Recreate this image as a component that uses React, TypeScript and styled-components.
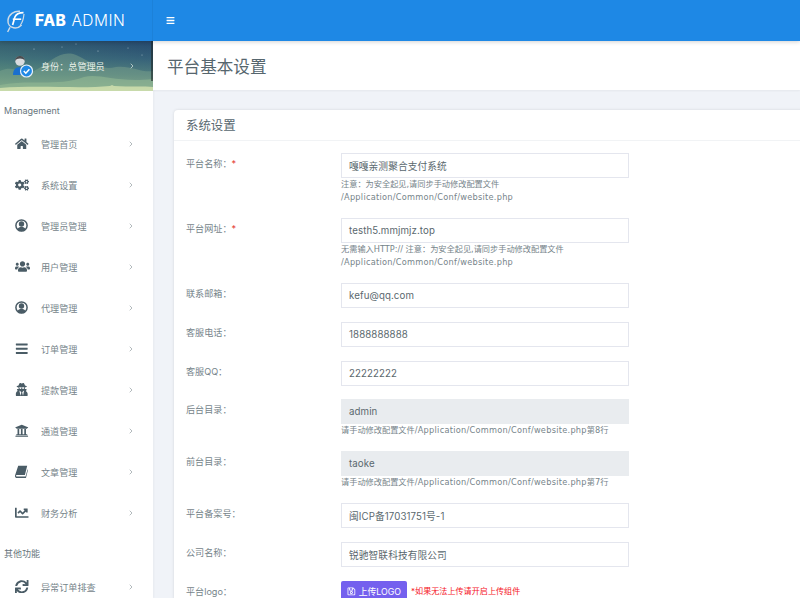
import * as React from "react";
import styled, { createGlobalStyle } from "styled-components";
import {
  FaHome,
  FaCogs,
  FaUsers,
  FaBars,
  FaUserSecret,
  FaUniversity,
  FaChartLine,
  FaSync,
  FaRegSave,
} from "react-icons/fa";
import { FiChevronRight } from "react-icons/fi";

const fontStack = `Inter, "Noto Sans CJK SC", "Noto Sans", sans-serif`;
const wideStack = `"DejaVu Sans", "Noto Sans CJK SC", sans-serif`;

const GlobalStyle = createGlobalStyle`
  html, body {
    margin: 0;
    padding: 0;
    height: 100%;
    overflow: hidden;
    background: #f0f3f8;
    font-family: ${fontStack};
  }
  * { box-sizing: border-box; }
`;

const Page = styled.div`
  width: 800px;
  height: 598px;
  overflow: hidden;
  display: flex;
  flex-direction: column;
`;

const TopBar = styled.header`
  height: 41px;
  flex-shrink: 0;
  display: flex;
  background: #1e88e5;
  box-shadow: 0 1px 4px rgba(0, 0, 0, 0.18);
  position: relative;
  z-index: 2;
`;

const Brand = styled.div`
  width: 153px;
  display: flex;
  align-items: center;
  gap: 9px;
  padding-left: 6px;
  border-right: 1px solid rgba(0, 0, 0, 0.05);
  color: #fff;
`;

const BrandText = styled.div`
  font-size: 15.5px;
  letter-spacing: 0.5px;
  white-space: nowrap;
  b {
    font-weight: 800;
    margin-right: 5px;
  }
  span {
    font-weight: 300;
  }
`;

const Burger = styled.div`
  margin-left: 13px;
  display: flex;
  align-items: center;
  color: #fff;
  font-size: 9px;
`;

const Body = styled.div`
  flex: 1;
  display: flex;
  min-height: 0;
`;

const Sidebar = styled.aside`
  width: 153px;
  flex-shrink: 0;
  background: #fff;
  box-shadow: 1px 0 2px rgba(0, 0, 0, 0.04);
  overflow: hidden;
`;

const UserPanel = styled.div`
  height: 50px;
  position: relative;
  display: flex;
  align-items: center;
  padding-left: 12px;
  overflow: hidden;
  background:
    linear-gradient(90deg, rgba(80, 130, 120, 0.35) 0%, rgba(40, 70, 120, 0.25) 100%),
    linear-gradient(180deg, #24496a 0%, #3a6a7a 35%, #5f917f 68%, #8fb78a 90%, #cfe0a8 100%);
`;

const Hills = styled.svg`
  position: absolute;
  inset: 0;
  width: 100%;
  height: 100%;
`;

const PanelEdge = styled.div`
  position: absolute;
  right: 0;
  top: 0;
  bottom: 10px;
  width: 2px;
  background: rgba(30, 40, 40, 0.6);
`;

const Avatar = styled.svg`
  position: relative;
  width: 21px;
  height: 23px;
  flex-shrink: 0;
`;

const PanelText = styled.div`
  position: relative;
  margin-left: 8px;
  width: 87px;
  font-size: 9.1px;
  color: #eaf1ea;
  white-space: nowrap;
`;

const PanelArrow = styled.div`
  position: relative;
  display: flex;
  color: #eaf1ea;
  font-size: 8px;
`;

const SectionTitle = styled.div<{ $top: number; $bottom: number }>`
  padding: ${(p) => p.$top}px 0 ${(p) => p.$bottom}px 4px;
  font-size: 9px;
  line-height: 12px;
  font-weight: 400;
  color: #67757c;
`;

const MenuItem = styled.div`
  height: 41px;
  display: flex;
  align-items: center;
  padding-left: 15px;
  color: #76848a;
`;

const MenuIcon = styled.span`
  width: 26px;
  flex-shrink: 0;
  display: flex;
  align-items: center;
  color: #4a5c66;
  font-size: 13.5px;
`;

const MenuLabel = styled.span`
  width: 86px;
  flex-shrink: 0;
  font-size: 9.1px;
  white-space: nowrap;
`;

const MenuArrow = styled.span`
  display: flex;
  color: #8d979c;
  font-size: 8px;
`;

const Main = styled.main`
  flex: 1;
  min-width: 0;
  overflow: hidden;
`;

const TitleBar = styled.div`
  height: 49px;
  background: #fff;
  display: flex;
  align-items: center;
  padding-left: 14px;
  font-size: 16.6px;
  color: #56666e;
  box-shadow: 0 1px 2px rgba(0, 0, 0, 0.05);
`;

const Card = styled.section`
  width: 720px;
  margin: 20px 0 0 21px;
  background: #fff;
  border-radius: 4px;
  box-shadow: 0 0 3px rgba(0, 0, 0, 0.12);
`;

const CardHeader = styled.div`
  height: 31px;
  padding-left: 12px;
  display: flex;
  align-items: center;
  font-size: 12.4px;
  color: #56666e;
  border-bottom: 1px solid #f1f3f5;
`;

const Form = styled.div`
  padding: 12px 0 0 12px;
`;

const Row = styled.div`
  display: flex;
  margin-bottom: 13.9px;
`;

const Label = styled.div`
  width: 155px;
  flex-shrink: 0;
  padding-top: 4px;
  font-size: 9.1px;
  line-height: 14px;
  color: #76848a;
  em {
    font-style: normal;
    color: #e3342f;
  }
`;

const Field = styled.div`
  width: 288px;
`;

const Input = styled.div<{ $disabled?: boolean }>`
  height: 25px;
  display: flex;
  align-items: center;
  padding-left: 7px;
  font-size: 9.7px;
  letter-spacing: 0.1px;
  color: #5a686e;
  background: ${(p) => (p.$disabled ? "#e9ecef" : "#fff")};
  border: 1px solid ${(p) => (p.$disabled ? "#e9ecef" : "#e4e6ee")};
  white-space: nowrap;
`;

const Help = styled.div`
  font-family: ${wideStack};
  font-size: 8.2px;
  line-height: 13px;
  color: #76848a;
  white-space: nowrap;
`;

const PathText = styled.span`
  letter-spacing: 0.27px;
`;

const UploadRow = styled.div`
  display: flex;
  align-items: flex-start;
  gap: 4px;
`;

const UploadButton = styled.div`
  width: 66px;
  height: 21px;
  display: flex;
  align-items: center;
  justify-content: center;
  gap: 3px;
  border-radius: 2px;
  background: #7460ee;
  color: #fff;
  font-size: 8.8px;
  line-height: 11px;
`;

const UploadHint = styled.span`
  padding-top: 5px;
  font-size: 8.1px;
  line-height: 11px;
  color: #f5141e;
`;

function BookIcon() {
  return (
    <svg width="13" height="13" viewBox="0 0 13 13" fill="currentColor">
      <path d="M3.2 0.8h9l-2.3 9.2H1.8C1.3 10 1 10.5 1.1 11c.1.4.4.6.9.6h8.6l1.9-7.2.5.3-2 8-.2.3H1.8C.8 13 .1 12.2 0 11.2c0-.3 0-.6.1-.9z" />
    </svg>
  );
}

function UserRingIcon() {
  return (
    <svg width="13" height="13" viewBox="0 0 13 13" fill="currentColor">
      <circle cx="6.5" cy="6.5" r="5.6" fill="none" stroke="currentColor" strokeWidth="1.5" />
      <circle cx="6.5" cy="5" r="2.7" />
      <path d="M2.4 10.600c.6-1.900 2.200-2.800 4.100-2.800s3.500.9 4.100 2.800c-1.100 1-2.500 1.600-4.100 1.600s-3-.6-4.100-1.600z" />
    </svg>
  );
}

const menu = [
  { icon: <FaHome />, label: "管理首页" },
  { icon: <FaCogs size={14} />, label: "系统设置" },
  { icon: <UserRingIcon />, label: "管理员管理" },
  { icon: <FaUsers size={15} />, label: "用户管理" },
  { icon: <UserRingIcon />, label: "代理管理" },
  { icon: <FaBars />, label: "订单管理" },
  { icon: <FaUserSecret />, label: "提款管理" },
  { icon: <FaUniversity />, label: "通道管理" },
  { icon: <BookIcon />, label: "文章管理" },
  { icon: <FaChartLine />, label: "财务分析" },
];

const confPath = "/Application/Common/Conf/website.php";

const fields = [
  { label: "平台名称：", required: true, value: "嘎嘎亲测聚合支付系统", help: [["注意：为安全起见,请同步手动修改配置文件"], ["", ""]] },
  { label: "平台网址：", required: true, value: "testh5.mmjmjz.top", help: [["无需输入HTTP:// 注意：为安全起见,请同步手动修改配置文件"], ["", ""]] },
  { label: "联系邮箱：", value: "kefu@qq.com" },
  { label: "客服电话：", value: "1888888888" },
  { label: "客服QQ：", value: "22222222" },
  { label: "后台目录：", value: "admin", disabled: true, help: [["请手动修改配置文件", "第8行"]] },
  { label: "前台目录：", value: "taoke", disabled: true, help: [["请手动修改配置文件", "第7行"]] },
  { label: "平台备案号：", value: "闽ICP备17031751号-1" },
  { label: "公司名称：", value: "锐驰智联科技有限公司" },
];

function Logo() {
  return (
    <svg width="20" height="24" viewBox="0 0 20 24" fill="none">
      <path d="M14 2.2C8 1.6 2.6 5.6 2 11c-.4 4 2 7.2 5.6 7.8 3 .5 6-.6 8-2.8" stroke="#cfdbe6" strokeWidth="1.5" />
      <path d="M18 5c-.4 4-1 8-3.6 10.8" stroke="#cfdbe6" strokeWidth="1.2" />
      <path d="M17.5 3.6c-4.5 0-7.4 1.4-8.6 4.4L6.6 16" stroke="#fff" strokeWidth="1.7" />
      <path d="M6.8 10.2h8.4" stroke="#fff" strokeWidth="1.6" />
      <path d="M4 18.4L1.6 23" stroke="#cfdbe6" strokeWidth="1.4" />
    </svg>
  );
}

export default function App() {
  return (
    <Page>
      <GlobalStyle />
      <TopBar>
        <Brand>
          <Logo />
          <BrandText>
            <b>FAB</b>
            <span>ADMIN</span>
          </BrandText>
        </Brand>
        <Burger>
          <FaBars />
        </Burger>
      </TopBar>
      <Body>
        <Sidebar>
          <UserPanel>
            <Hills viewBox="0 0 153 50" preserveAspectRatio="none">
              <path d="M0 30 C12 24 20 32 34 30 C50 22 60 8 76 14 C90 20 100 30 116 26 C130 24 142 32 153 30 V50 H0Z" fill="#7ea38f" opacity="0.45" />
              <path d="M0 44 C30 38 56 46 84 36 C100 32 116 42 153 38 V50 H0Z" fill="#96bb96" opacity="0.55" />
              <path d="M0 47 C40 44 80 48 110 45 L112 44 L114 45 C130 46 145 45 153 46 V50 H0Z" fill="#d6e3b0" opacity="0.8" />
              <g fill="#dfe8ee" opacity="0.7">
                <circle cx="34" cy="8" r="0.6" />
                <circle cx="62" cy="6" r="0.5" />
                <circle cx="76" cy="3" r="0.5" />
                <circle cx="98" cy="10" r="0.6" />
                <circle cx="128" cy="7" r="0.5" />
                <circle cx="142" cy="14" r="0.5" />
              </g>
            </Hills>
            <PanelEdge />
            <Avatar viewBox="0 0 21 23">
              <path d="M1 20c0-5 2-8 7.5-8s7 3 7 8z" fill="#1a6fce" />
              <circle cx="8" cy="6" r="4.8" fill="#d9dcdf" />
              <path d="M3.2 6C3 2.6 5.4 1 8 1s5 1.6 4.8 5c-1-2-2.6-2.6-4.8-2.6S4.200 4 3.200 6z" fill="#4b4d50" />
              <circle cx="14.500" cy="16" r="6" fill="#1e88e5" stroke="#e6f0fa" strokeWidth="1.2" />
              <path d="M11.800 16l2 2.200 3.600-4" stroke="#fff" strokeWidth="1.500" fill="none" />
            </Avatar>
            <PanelText>身份：总管理员</PanelText>
            <PanelArrow>
              <FiChevronRight />
            </PanelArrow>
          </UserPanel>
          <SectionTitle $top={14} $bottom={6}>Management</SectionTitle>
          {menu.map((m) => (
            <MenuItem key={m.label}>
              <MenuIcon>{m.icon}</MenuIcon>
              <MenuLabel>{m.label}</MenuLabel>
              <MenuArrow>
                <FiChevronRight />
              </MenuArrow>
            </MenuItem>
          ))}
          <SectionTitle $top={15} $bottom={6}>其他功能</SectionTitle>
          <MenuItem>
            <MenuIcon>
              <FaSync />
            </MenuIcon>
            <MenuLabel>异常订单排查</MenuLabel>
            <MenuArrow>
              <FiChevronRight />
            </MenuArrow>
          </MenuItem>
        </Sidebar>
        <Main>
          <TitleBar>平台基本设置</TitleBar>
          <Card>
            <CardHeader>系统设置</CardHeader>
            <Form>
              {fields.map((f) => (
                <Row key={f.label}>
                  <Label>
                    {f.label}
                    {f.required && <em>*</em>}
                  </Label>
                  <Field>
                    <Input $disabled={f.disabled}>{f.value}</Input>
                    {f.help?.map((h, i) => (
                      <Help key={i}>
                        {h[0]}
                        {h.length > 1 && <PathText>{confPath}</PathText>}
                        {h[1]}
                      </Help>
                    ))}
                  </Field>
                </Row>
              ))}
              <Row>
                <Label>平台logo：</Label>
                <UploadRow>
                  <UploadButton>
                    <FaRegSave />
                    上传LOGO
                  </UploadButton>
                  <UploadHint>*如果无法上传请开启上传组件</UploadHint>
                </UploadRow>
              </Row>
            </Form>
          </Card>
        </Main>
      </Body>
    </Page>
  );
}
